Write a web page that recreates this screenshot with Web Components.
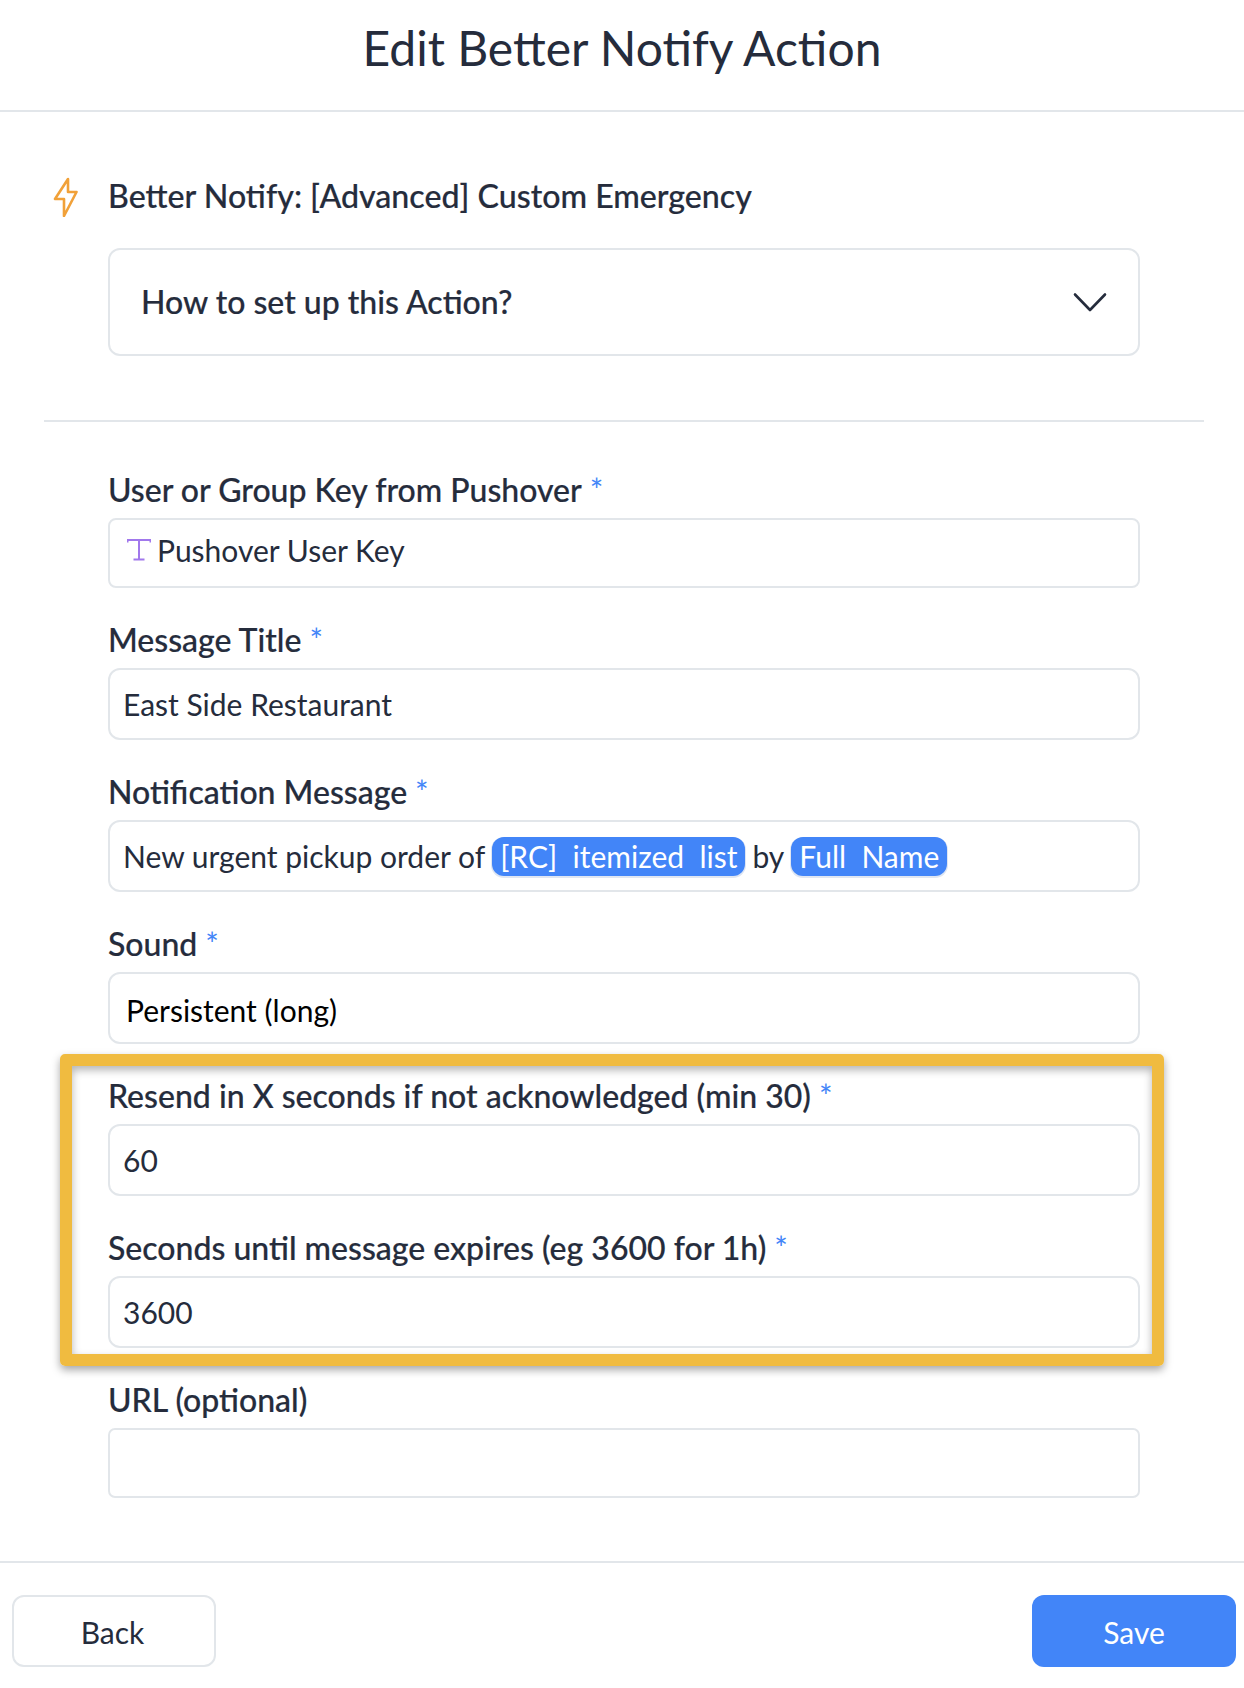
<!DOCTYPE html>
<html><head><meta charset="utf-8">
<style>
html,body{margin:0;padding:0;background:#fff}
body{font-family:Lato,"Liberation Sans",sans-serif;color:#252c3c;width:1244px;height:1688px;overflow:hidden}
</style></head><body>
<edit-page>
  <page-header>Edit Better Notify Action</page-header>
  <action-title>Better Notify: [Advanced] Custom Emergency</action-title>
  <help-box>How to set up this Action?</help-box>
  <h-rule></h-rule>
  <form-field label="User or Group Key from Pushover" required style="--input-h:70px;--top:48px;--radius:8px"><var-icon></var-icon><span style="margin-left:0;margin-top:-6px">Pushover User Key</span></form-field>
  <form-field label="Message Title" required><span>East Side Restaurant</span></form-field>
  <form-field label="Notification Message" required style="--gap:7px"><span>New urgent pickup order of</span><token-pill>[RC]&nbsp;&nbsp;itemized&nbsp;&nbsp;list</token-pill><span>by</span><token-pill>Full&nbsp;&nbsp;Name</token-pill></form-field>
  <form-field label="Sound" required style="--pad:16px;--text:#000"><span style="margin-top:4px">Persistent (long)</span></form-field>
  <highlight-group>
    <form-field label="Resend in X seconds if not acknowledged (min 30)" required><span>60</span></form-field>
    <form-field label="Seconds until message expires (eg 3600 for 1h)" required><span>3600</span></form-field>
  </highlight-group>
  <form-field label="URL (optional)" style="--input-h:70px;--radius:7px"></form-field>
  <page-footer></page-footer>
</edit-page>
<script>
function def(name, html){
  customElements.define(name, class extends HTMLElement{
    constructor(){super();this.attachShadow({mode:'open'}).innerHTML=typeof html==='function'?html(this):html;}
  });
}
def('edit-page',`<style>:host{display:flex;flex-direction:column;width:1244px;height:1688px}</style><slot></slot>`);
def('page-header',`<style>:host{display:flex;align-items:center;justify-content:center;box-sizing:content-box;height:95px;padding-bottom:15px;border-bottom:2px solid #e2e6ea;font-size:48px;font-weight:400;color:#252c3c}</style><slot></slot>`);
def('action-title',`<style>:host{display:flex;align-items:center;height:40px;margin-top:64px;padding-left:52px;font-size:32.15px;font-weight:500;color:#252c3c;-webkit-text-stroke:.2px #252c3c}
svg{width:27px;height:42px;margin-right:29px;flex:none}span{position:relative;top:-1px}</style>
<svg viewBox="0 0 27 42" fill="none" stroke="#f1a139" stroke-width="2.6" stroke-linejoin="round" stroke-linecap="round"><path d="M16 4 3 24H12V41L24.5 17H16Z"/></svg><span><slot></slot></span>`);
def('help-box',`<style>:host{display:flex;align-items:center;justify-content:space-between;box-sizing:border-box;margin:32px 104px 0 108px;height:108px;border:2px solid #e2e6ea;border-radius:12px;padding:0 31px;font-size:32px;font-weight:500;color:#252c3c;-webkit-text-stroke:.2px #252c3c}
svg{width:34px;height:20px;flex:none}span{position:relative;top:-1px}</style><span><slot></slot></span>
<svg viewBox="0 0 34 20" fill="none" stroke="#252c3c" stroke-width="2.6" stroke-linecap="round" stroke-linejoin="round"><path d="M2 2.5 17 18 32 2.5"/></svg>`);
def('h-rule',`<style>:host{display:block;height:2px;margin:64px 40px 0 44px;background:#e2e6ea}</style>`);
def('form-field',(el)=>`<style>
:host{display:block;margin:var(--top,32px) 104px 0 108px;font-size:32px}
.l{display:block;height:40px;line-height:40px;font-weight:500;color:#252c3c;white-space:nowrap;-webkit-text-stroke:.2px #252c3c}
.s{color:#4285f8;-webkit-text-stroke:0;font-weight:400;margin-left:8px}
.i{display:flex;align-items:center;gap:var(--gap,6px);box-sizing:border-box;height:var(--input-h,72px);margin-top:8px;border:2px solid #e2e6ea;border-radius:var(--radius,12px);padding:0 var(--pad,13px);color:var(--text,#252c3c);font-size:30px;white-space:nowrap}
</style><span class="l">${el.getAttribute('label')}${el.hasAttribute('required')?'<span class="s">*</span>':''}</span><div class="i"><slot></slot></div>`);
def('var-icon',`<style>:host{display:inline-flex;width:24px;height:24px;margin-left:4px;margin-top:-6px}svg{width:24px;height:24px}</style>
<svg viewBox="0 0 24 24" fill="none" stroke="#a178ec" stroke-width="2"><path d="M0.5 4.5V2H23.5V4.5M12 2V21M6.5 21.5H17.5"/></svg>`);
def('token-pill',`<style>:host{display:inline-flex;align-items:center;box-sizing:border-box;height:39px;padding:0 8px;background:#4285f8;color:#fff;border-radius:12px;box-shadow:0 1px 0 1px #dfe6f2;font-size:30px}</style><slot></slot>`);
def('highlight-group',`<style>:host{display:flow-root;position:relative}
.o{position:absolute;left:60px;right:80px;top:10px;bottom:-18px;border:12px solid #f0bb40;border-radius:5px;box-shadow:0 4px 8px rgba(0,0,0,.35),inset 0 4px 8px rgba(0,0,0,.3);pointer-events:none}
</style><slot></slot><div class="o"></div>`);
def('page-footer',`<style>:host{display:flex;justify-content:space-between;align-items:flex-start;margin-top:auto;border-top:2px solid #e2e6ea;padding:32px 8px 21px 12px;height:72px;box-sizing:content-box}
.b{box-sizing:border-box;width:204px;height:72px;padding-top:2px;border-radius:12px;display:flex;align-items:center;justify-content:center;font-size:30px}
.back{border:2px solid #e2e6ea;color:#252c3c;background:#fff;padding-right:3px}.save{background:#4285f8;color:#fff}</style>
<div class="b back">Back</div><div class="b save">Save</div>`);
</script>
</body></html>
